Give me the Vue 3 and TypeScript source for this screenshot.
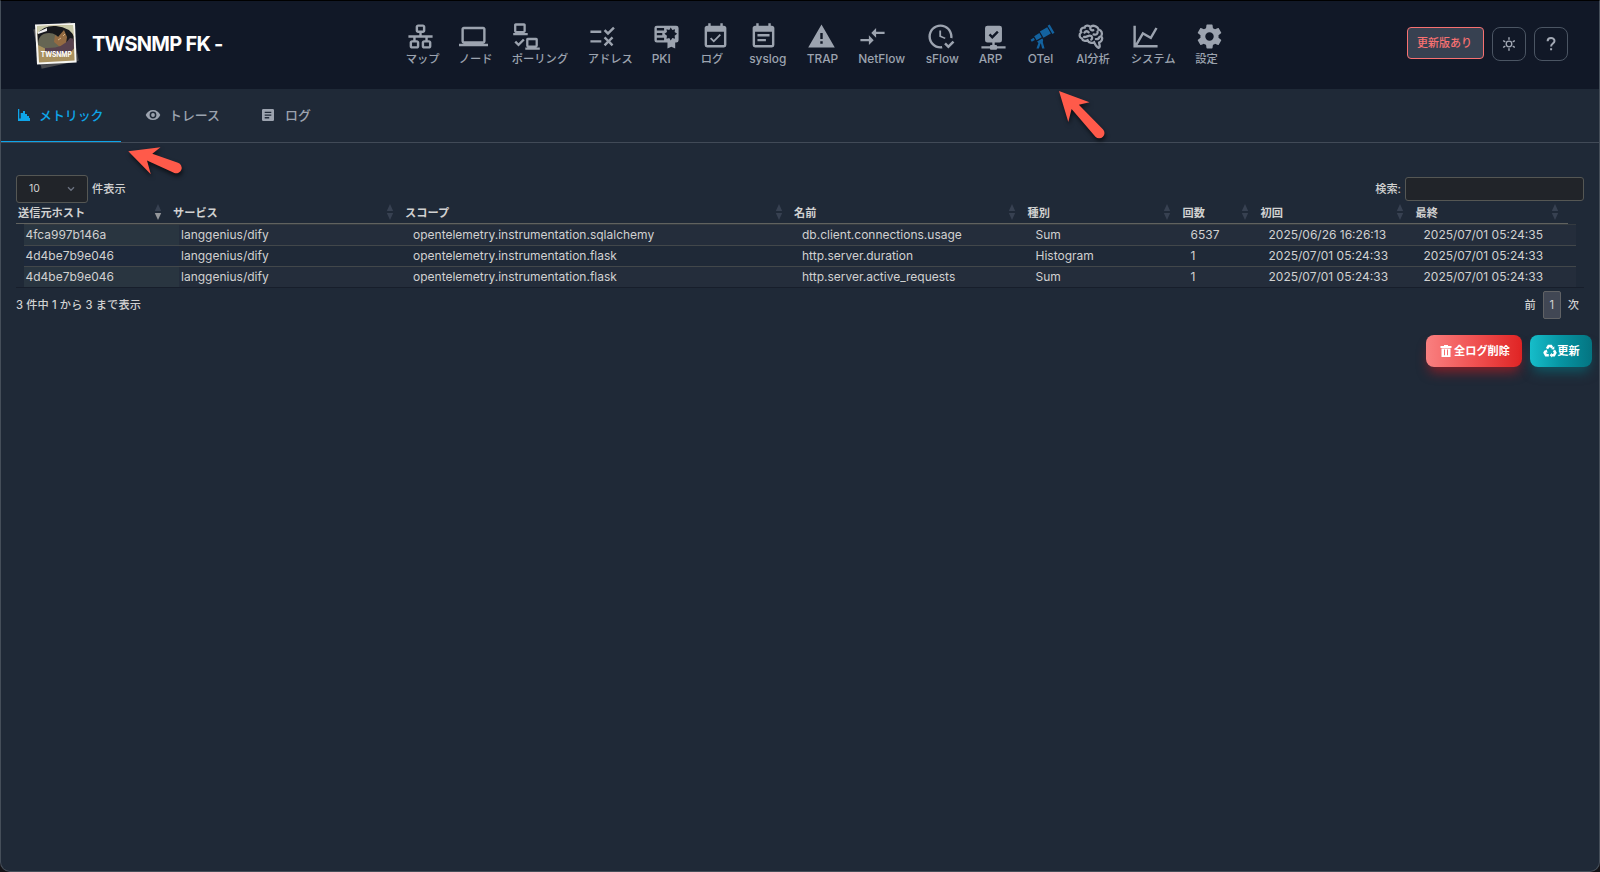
<script setup lang="ts">
interface NavItem {
  label: string
  icon: string
  active?: boolean
  stroke?: string
  even?: boolean
  latin?: boolean
}

const calendar =
  'M19 19H5V8H19ZM16 1V3H8V1H6V3H5C3.89 3 3 3.89 3 5V19A2 2 0 0 0 5 21H19A2 2 0 0 0 21 19V5C21 3.89 20.1 3 19 3H18V1Z'

const nav: NavItem[] = [
  {
    label: 'マップ',
    icon: 'M10 2C8.9 2 8 2.9 8 4V7C8 8.1 8.9 9 10 9H11V11H2V13H6V15H5C3.9 15 3 15.9 3 17V20C3 21.1 3.9 22 5 22H9C10.1 22 11 21.1 11 20V17C11 15.9 10.1 15 9 15H8V13H16V15H15C13.9 15 13 15.9 13 17V20C13 21.1 13.9 22 15 22H19C20.1 22 21 21.1 21 20V17C21 15.9 20.1 15 19 15H18V13H22V11H13V9H14C15.1 9 16 8.1 16 7V4C16 2.9 15.1 2 14 2ZM10 4H14V7H10ZM5 17H9V20H5ZM15 17H19V20H15Z',
    even: true,
  },
  {
    label: 'ノード',
    icon: 'M4 6H20V16H4M20 18A2 2 0 0 0 22 16V6C22 4.89 21.1 4 20 4H4C2.89 4 2 4.89 2 6V16A2 2 0 0 0 4 18H0V20H24V18H20Z',
  },
  {
    label: 'ポーリング',
    icon: 'M3 1H10C10.8 1 11.4 1.6 11.4 2.4V7.5C11.4 8.2 10.9 8.8 10.2 9H13V11H1V9H2.8C2.1 8.8 1.7 8.2 1.7 7.5V2.4C1.7 1.6 2.3 1 3 1ZM3.6 3V7.5H9.5V3ZM13 13H20C20.8 13 21.4 13.6 21.4 14.4V19.5C21.4 20.2 20.9 20.8 20.2 21H23V23H11V21H12.8C12.1 20.8 11.7 20.2 11.7 19.5V14.4C11.7 13.6 12.2 13 13 13ZM13.6 15V19.5H19.5V15ZM3.4 15.5L5.4 17.5L9.1 13.8L10.5 15.2L5.4 20.3L2 16.9Z',
    even: true,
  },
  {
    label: 'アドレス',
    icon: 'M16.54 11L13 7.46l1.41-1.41 2.12 2.12 4.24-4.24 1.41 1.41L16.54 11zM11 7H2v2h9V7zm10 6.41L19.59 12 17 14.59 14.41 12 13 13.41 15.59 16 13 18.59 14.41 20 17 17.41 19.59 20 21 18.59 18.41 16 21 13.41zM11 15H2v2h9v-2z',
  },
  {
    label: 'PKI',
    icon: 'M4 3H20A2 2 0 0 1 22 5V15A2 2 0 0 1 20 17H19.2V22L16 20.4L12.8 22V17H4A2 2 0 0 1 2 15V5A2 2 0 0 1 4 3ZM4 5V7H10V5ZM4 9V11H8.5V9ZM4 13V15H10V13ZM15.5 4.5L14.3 6.6L12 6L12.4 8.3L10.3 9.8L12.4 11.3L12 13.8L14.3 13.2L15.5 15.3L16.8 13.2L19.1 13.8L18.7 11.3L20.8 9.8L18.7 8.3L19.1 6L16.8 6.6Z',
    even: true,
    latin: true,
  },
  {
    label: 'ログ',
    icon: calendar + 'M16.53 11.06L15.47 10L10.59 14.88L8.47 12.76L7.41 13.82L10.59 17Z',
    even: true,
  },
  { label: 'syslog', icon: calendar + 'M14 14H7V16H14ZM17 10H7V12H17Z', even: true, latin: true },
  { label: 'TRAP', icon: 'M13 14H11V9H13M13 18H11V16H13M1 21H23L12 2L1 21Z', latin: true },
  {
    label: 'NetFlow',
    icon: 'M9.01 14H2v2h7.01v3L13 15l-3.99-4v3zm5.98-1v-3H22V8h-7.01V5L11 9l3.99 4z',
    latin: true,
  },
  {
    label: 'sFlow',
    icon: 'M23.5 17L18.5 22L15 18.5L16.5 17L18.5 19L22 15.5L23.5 17M13.1 19.9C12.7 20 12.4 20 12 20C7.6 20 4 16.4 4 12S7.6 4 12 4 20 7.6 20 12C20 12.4 20 12.7 19.9 13.1C20.6 13.2 21.2 13.4 21.8 13.7C21.9 13.1 22 12.6 22 12C22 6.5 17.5 2 12 2S2 6.5 2 12C2 17.5 6.5 22 12 22C12.6 22 13.2 21.9 13.7 21.8C13.4 21.2 13.2 20.6 13.1 19.9M15.6 14.1L11 12.3V7H12.5V11.4L16.2 13Z',
    latin: true,
  },
  {
    label: 'ARP',
    icon: 'M17 3H7A2 2 0 0 0 5 5V15A2 2 0 0 0 7 17H11V19H10A1 1 0 0 0 9 20H2V22H9A1 1 0 0 0 10 23H14A1 1 0 0 0 15 22H22V20H15A1 1 0 0 0 14 19H13V17H17A2 2 0 0 0 19 15V5A2 2 0 0 0 17 3ZM11 14L8 11L9.41 9.6L11 11.2L14.9 7.3L16.3 8.7Z',
    even: true,
    latin: true,
  },
  {
    label: 'OTel',
    icon: 'M21.9 8.9L20.2 9.9L16.2 3L17.9 2ZM9.8 7.9L12.8 13.1L18.9 9.6L15.9 4.4ZM11.4 12.7L9.4 9.2L5.1 11.7L7.1 15.2ZM2.1 14.6L3.1 16.3L5.7 14.8L4.7 13.1ZM12.1 14L11.8 13.6L7.5 16.1L7.8 16.5C8 16.8 8.3 17.1 8.6 17.3L7 22H9L10.4 17.7H10.7L11.7 22H13.7L12.2 16.5C12.7 15.7 12.6 14.8 12.1 14Z',
    active: true,
    latin: true,
  },
  {
    label: 'AI分析',
    icon: '',
    stroke:
      'M11.8 4.2C10.5 2.4 7.6 2.8 7.1 4.7C4.7 4.3 3.2 6.7 4.3 8.6C2.2 10 2.7 13.1 5 13.7C5.6 15.6 8 16.2 9.6 15.1C10.5 17.3 13.2 17.8 15 16.7C15.8 18.6 16.6 20.6 18.6 21.4C20.5 21 19.2 18.7 19.1 17C21.5 16.3 22.4 13.5 20.9 11.7C22.3 9.4 21 6.6 18.7 6.3C18.1 3.3 13.7 2.1 11.8 4.2ZM7 8.7C8 7.2 9.7 7.4 10.5 8.6M12 4.5C11.2 6 12.8 7.3 14.3 6.7M6.7 12.4C8.8 12.7 9.6 11.2 11.6 11.3C13.8 11.5 13.7 13.8 12.6 14.6M14.6 10.2C16.8 11 18.4 9.7 17.8 7.9M16.5 14.1C18.3 14.4 19.2 13.4 19.5 12.3',
  },
  {
    label: 'システム',
    icon: 'M16 11.78L20.24 4.45L21.97 5.45L16.74 14.5L10.23 10.75L5.46 19H22V21H2V3H4V17.54L9.5 8Z',
  },
  {
    label: '設定',
    icon: 'M12 15.5A3.5 3.5 0 0 1 8.5 12A3.5 3.5 0 0 1 12 8.5A3.5 3.5 0 0 1 15.5 12A3.5 3.5 0 0 1 12 15.5M19.43 12.97C19.47 12.65 19.5 12.33 19.5 12C19.5 11.67 19.47 11.34 19.43 11L21.54 9.37C21.73 9.22 21.78 8.95 21.66 8.73L19.66 5.27C19.54 5.05 19.27 4.96 19.05 5.05L16.56 6.05C16.04 5.66 15.5 5.32 14.87 5.07L14.5 2.42C14.46 2.18 14.25 2 14 2H10C9.75 2 9.54 2.18 9.5 2.42L9.13 5.07C8.5 5.32 7.96 5.66 7.44 6.05L4.95 5.05C4.73 4.96 4.46 5.05 4.34 5.27L2.34 8.73C2.21 8.95 2.27 9.22 2.46 9.37L4.57 11C4.53 11.34 4.5 11.67 4.5 12C4.5 12.33 4.53 12.65 4.57 12.97L2.46 14.63C2.27 14.78 2.21 15.05 2.34 15.27L4.34 18.73C4.46 18.95 4.73 19.03 4.95 18.95L7.44 17.94C7.96 18.34 8.5 18.68 9.13 18.93L9.5 21.58C9.54 21.82 9.75 22 10 22H14C14.25 22 14.46 21.82 14.5 21.58L14.87 18.93C15.5 18.67 16.04 18.34 16.56 17.94L19.05 18.95C19.27 19.03 19.54 18.95 19.66 18.73L21.66 15.27C21.78 15.05 21.73 14.78 21.54 14.63Z',
  },
]

const columns = ['送信元ホスト', 'サービス', 'スコープ', '名前', '種別', '回数', '初回', '最終']

const rows: string[][] = [
  ['4fca997b146a', 'langgenius/dify', 'opentelemetry.instrumentation.sqlalchemy', 'db.client.connections.usage', 'Sum', '6537', '2025/06/26 16:26:13', '2025/07/01 05:24:35'],
  ['4d4be7b9e046', 'langgenius/dify', 'opentelemetry.instrumentation.flask', 'http.server.duration', 'Histogram', '1', '2025/07/01 05:24:33', '2025/07/01 05:24:33'],
  ['4d4be7b9e046', 'langgenius/dify', 'opentelemetry.instrumentation.flask', 'http.server.active_requests', 'Sum', '1', '2025/07/01 05:24:33', '2025/07/01 05:24:33'],
]
</script>

<template>
  <div class="window">
    <header class="topbar">
      <svg class="logo" viewBox="-1 -1 50 50">
        <defs>
          <clipPath id="photo"><path d="M5 6L41 5L42.6 40.5L7 42.4Z" /></clipPath>
        </defs>
        <rect x="5" y="5" width="38" height="40" fill="#4a4b4f" transform="rotate(-12 25 25)" />
        <rect x="6" y="5" width="38" height="38" fill="#3a3c43" transform="rotate(-7 25 25)" />
        <path d="M3 4.6L43 3L44.6 42.5L5 44.6Z" fill="#f6f5f2" />
        <g clip-path="url(#photo)">
          <rect width="50" height="50" fill="#a9915f" />
          <path d="M4 4H44V16L32 8L18 7L4 15Z" fill="#c9c9a9" />
          <path d="M5 14Q12 5 24 6Q38 7 43 18L40 26L5 25Z" fill="#17181c" />
          <path d="M6 25Q6 13 17 13Q25 13 29 21L31 28L18 31Z" fill="#656553" />
          <path d="M22 22L23 15L26 17L32 10L35 17L34 24L28 27Z" fill="#946b42" />
          <path d="M26 20L29 18M31 16L33 14" stroke="#d7b184" stroke-width="1" />
          <path d="M13 28Q31 29 38 18Q44 18 44 26L39 32Q26 36 13 31Z" fill="#58424e" />
          <path d="M6 12L15 8V11L6 14Z" fill="#eee" />
        </g>
        <text x="8.8" y="37.2" textLength="31" lengthAdjust="spacingAndGlyphs">TWSNMP</text>
      </svg>
      <h1>TWSNMP FK -</h1>
      <nav class="menu">
        <a v-for="item in nav" :key="item.label" class="menu-item" :class="{ latin: item.latin }">
          <svg class="menu-icon" :class="{ active: item.active }" viewBox="0 0 24 24">
            <path :d="item.icon" :fill-rule="item.even ? 'evenodd' : 'nonzero'" fill="currentColor" />
            <path v-if="item.stroke" :d="item.stroke" fill="none" stroke="currentColor" stroke-width="1.9" stroke-linecap="round" />
          </svg>
          <span>{{ item.label }}</span>
        </a>
      </nav>
      <div class="actions">
        <button class="update">更新版あり</button>
        <button class="square">
          <svg width="14" height="14" viewBox="0 0 14 14" fill="none" stroke="#a3a9b5">
            <circle cx="7" cy="7" r="2.8" stroke-width="1.3" />
            <path d="M7 .8V2.2M7 11.8V13.2M1.6 3.9L2.8 4.6M11.2 9.4L12.4 10.1M1.6 10.1L2.8 9.4M11.2 4.6L12.4 3.9" stroke-width="1.4" stroke-linecap="round" />
          </svg>
        </button>
        <button class="square">
          <svg width="14" height="16" viewBox="0 0 14 16" fill="none" stroke="#a3a9b5" stroke-width="2">
            <path d="M3.6 5.2C3.6 .9 10.5 .9 10.5 5C10.5 7.6 7.1 7.6 7.1 10.5" />
            <path d="M7.1 12.2V14.3" />
          </svg>
        </button>
      </div>
    </header>

    <div class="tabs">
      <div class="tab selected">
        <svg width="14" height="14" viewBox="0 0 14 14"><path d="M1 1H2.3V10.5H3.7V5H6V3H8V6H10V8H12V10H13V13H1Z" fill="currentColor" /></svg>
        <span>メトリック</span>
      </div>
      <div class="tab trace">
        <svg width="16" height="14" viewBox="0 0 16 14"><path fill-rule="evenodd" d="M8 2C4.6 2 2 4 .7 7C2 10 4.6 12 8 12S14 10 15.3 7C14 4 11.4 2 8 2ZM8 3.6A3.4 3.4 0 1 1 8 10.4A3.4 3.4 0 1 1 8 3.6ZM8 5.1A1.9 1.9 0 1 0 8 8.9A1.9 1.9 0 1 0 8 5.1Z" fill="currentColor" /></svg>
        <span>トレース</span>
      </div>
      <div class="tab logs">
        <svg width="14" height="14" viewBox="0 0 14 14"><path fill-rule="evenodd" d="M2.2 1H11.8Q13 1 13 2.2V11.8Q13 13 11.8 13H2.2Q1 13 1 11.8V2.2Q1 1 2.2 1ZM3.7 3.7V5H10.3V3.7ZM3.7 6.4V7.7H10.3V6.4ZM3.7 9.1V10.4H8.2V9.1Z" fill="currentColor" /></svg>
        <span>ログ</span>
      </div>
    </div>

    <main class="content">
      <div class="controls">
        <div class="length">
          <div class="select">
            <span>10</span>
            <svg width="8" height="6" viewBox="0 0 8 6"><path d="M1 1.2L4 4.3L7 1.2" fill="none" stroke="#6b7280" stroke-width="1.3" /></svg>
          </div>
          <span>件表示</span>
        </div>
        <label class="search"><span>検索:</span><input type="text" /></label>
      </div>

      <div class="table">
        <div class="grid head">
          <div v-for="(name, i) in columns" :key="name" class="th">
            <span>{{ name }}</span>
            <svg width="8" height="18" viewBox="0 0 8 18">
              <path d="M4 1L7.2 8H.8Z" fill="#374151" />
              <path d="M4 17L7.2 10H.8Z" :fill="i === 0 ? '#94979b' : '#374151'" />
            </svg>
          </div>
        </div>
        <div v-for="(row, r) in rows" :key="r" class="grid row">
          <div v-for="(cell, c) in row" :key="c" class="td">{{ cell }}</div>
        </div>
      </div>

      <div class="footer">
        <span class="info">3 件中 1 から 3 まで表示</span>
        <div class="pager"><span>前</span><span class="page">1</span><span>次</span></div>
      </div>
    </main>

    <div class="buttons">
      <button class="btn delete">
        <svg width="12" height="14" viewBox="0 0 12 14"><path fill-rule="evenodd" d="M4 1H8V2H11.5V4H.5V2H4ZM1.5 4.5H10.5V13H1.5ZM4 5.5V11.3H5V5.5ZM7 5.5V11.3H8V5.5Z" fill="#fff" /></svg>
        <span>全ログ削除</span>
      </button>
      <button class="btn refresh">
        <svg width="14" height="14" viewBox="0 0 14 14" fill="none" stroke="#fff" stroke-width="2.6">
          <path d="M4 4.6L5.6 2H8L9.2 3.9M11 6.4L12.3 8.8L11 11.2H8.6M5.8 11.2H3L1.7 8.8L2.6 7.1" />
          <path d="M8.2 5.3L11.3 5.4L11.3 2.2ZM8.9 8.7V13.4L6.6 11.2ZM.6 7.5L3.6 5.6L4.7 8.7Z" fill="#fff" stroke="none" />
        </svg>
        <span>更新</span>
      </button>
    </div>

    <svg class="pointers" width="1600" height="200" viewBox="0 0 1600 200">
      <g fill="#ff5a4a">
        <path d="M1059 91L1089.5 102.3L1078.8 104.8L1102.9 129.2A5.3 5.3 0 0 1 1095.4 136.8L1071.6 109L1068.3 122Z" />
        <path d="M128.3 151.2L160.5 147.3L152.3 153.8L178 162.7A5.4 5.4 0 0 1 174.4 173L147 160.5L150.8 174.2Z" />
      </g>
    </svg>
  </div>
</template>

<style>
body {
  background: #141317;
}
</style>

<style scoped>
.window {
  position: relative;
  box-sizing: border-box;
  width: 1600px;
  height: 872px;
  overflow: hidden;
  border: 1px solid #454e59;
  border-top-color: #000;
  border-radius: 0 0 10px 10px;
  background: #1f2937;
  color: #d1d1d1;
  font-family: Inter, 'Noto Sans CJK JP', sans-serif;
  font-size: 12px;
}
.topbar {
  display: flex;
  height: 88px;
  background: #111827;
}
.logo {
  flex: none;
  width: 50px;
  height: 50px;
  margin: 18px 0 0 30px;
}
.logo text {
  font: bold 7px Inter, sans-serif;
  fill: #fff;
}
h1 {
  flex: none;
  width: 313px;
  margin: 29px 0 0 11px;
  color: #fff;
  font-size: 20px;
  line-height: 28px;
  font-weight: 650;
  letter-spacing: -0.75px;
  white-space: nowrap;
}
.menu {
  display: grid;
  grid-template-columns: 53px 53px 76px 64px 49px 48.5px 57.5px 51.5px 67.5px 53px 49px 48.5px 54.5px 64.5px 40px;
  flex: none;
  width: 830px;
  margin-top: 21px;
}
.menu-item {
  display: flex;
  flex-direction: column;
  color: #9ca3af;
  font-size: 11.3px;
  line-height: 16px;
  font-weight: 500;
  white-space: nowrap;
}
.menu-item.latin {
  font-size: 11.9px;
}
.menu-item span {
  padding-left: 0.7px;
}
.menu-icon {
  display: block;
  width: 29px;
  height: 29px;
  margin-left: 0.7px;
}
.menu-icon.active {
  color: #13629f;
}
.actions {
  display: flex;
  gap: 8px;
  margin: 26px 0 0 172px;
}
button {
  display: flex;
  box-sizing: border-box;
  align-items: center;
  justify-content: center;
  padding: 0;
  font-family: inherit;
}
.update {
  width: 77px;
  height: 32px;
  padding: 0 2px 2px 0;
  border: 1px solid #f87171;
  border-radius: 4px;
  background: #374151;
  color: #f87171;
  font-size: 11px;
  font-weight: 500;
}
.square {
  width: 34px;
  height: 34px;
  border: 1px solid #4b5563;
  border-radius: 8px;
  background: none;
}
.tabs {
  display: flex;
  box-sizing: border-box;
  height: 54px;
  border-bottom: 1px solid #414a57;
  color: #9ca3af;
  font-size: 12.9px;
  font-weight: 500;
}
.tab {
  display: flex;
  box-sizing: border-box;
  align-items: center;
  gap: 8px;
  height: 53px;
  padding: 0 16px 1px;
}
.tab span {
  margin-top: -2px;
}
.tab.selected {
  width: 120px;
  padding-bottom: 0;
  border-bottom: 1px solid #0ea5e9;
  color: #0ea5e9;
}
.tab.trace {
  width: 122px;
  padding-left: 24px;
  gap: 8px;
}
.tab.logs {
  padding-left: 18px;
  gap: 10px;
}
.tab svg {
  flex: none;
}
.content {
  padding: 31px 15px 0;
}
.controls {
  display: flex;
  justify-content: space-between;
  height: 29px;
}
.length {
  display: flex;
  gap: 4px;
  font-size: 11.2px;
  line-height: 30px;
  font-weight: 500;
}
.select {
  display: flex;
  box-sizing: border-box;
  align-items: center;
  justify-content: space-between;
  width: 72px;
  height: 28px;
  margin-top: 1px;
  padding: 0 12px;
  border: 1px solid #555754;
  border-radius: 3px;
  background: #212429;
  font-size: 10.5px;
  font-weight: 400;
}
.search {
  display: flex;
  align-items: center;
  height: 30px;
  gap: 4px;
  font-size: 11.2px;
  font-weight: 500;
}
.search span {
  margin-top: -2px;
}
input {
  box-sizing: border-box;
  width: 179px;
  height: 24px;
  border: 1px solid #555754;
  border-radius: 3px;
  background: #212429;
}
.table {
  border-bottom: 1px solid #171e2b;
}
.grid {
  display: grid;
  grid-template-columns: 155px 232px 389px 233.5px 155px 78px 155px 154.5px;
  width: 1552px;
}
.head {
  height: 20px;
  border-bottom: 1px solid #60625f;
  font-size: 11.2px;
  line-height: 20px;
  font-weight: 700;
}
.th {
  display: flex;
  justify-content: space-between;
  padding: 0 9.5px 0 2px;
}
.row {
  box-sizing: border-box;
  height: 21px;
  margin-left: 8px;
  border-top: 1px solid #42474a;
  line-height: 20px;
}
.row:nth-child(2) {
  border-top-color: #343a40;
}
.row:nth-child(even) {
  background: #242d3b;
}
.td {
  padding-left: 2px;
  white-space: nowrap;
}
.row .td:first-child {
  padding-left: 1.5px;
  background: #1e293b;
}
.row:nth-child(even) .td:first-child {
  background: #293540;
}
.footer {
  display: flex;
  justify-content: space-between;
  height: 32px;
  padding-top: 3px;
  font-size: 11.2px;
  line-height: 28px;
  font-weight: 500;
}
.info {
  letter-spacing: 0.12px;
}
.pager {
  display: flex;
  gap: 7px;
  padding-right: 5px;
}
.page {
  box-sizing: border-box;
  width: 18px;
  height: 28px;
  border: 1px solid #606265;
  border-radius: 2px;
  background: #414754;
  line-height: 26px;
  font-weight: 400;
  text-align: center;
}
.buttons {
  display: flex;
  justify-content: flex-end;
  gap: 8px;
  padding: 12px 7px 0;
}
.btn {
  height: 32px;
  border: 0;
  border-radius: 8px;
  color: #fff;
  font-size: 11.2px;
  font-weight: 700;
}
.btn span {
  margin-top: -2px;
}
.delete {
  gap: 2px;
  width: 96px;
  padding-left: 2px;
  background: linear-gradient(90deg, #f98080, #f05252 50%, #e02424);
  box-shadow: 0 8px 12px -3px rgba(200, 25, 30, 0.6);
}
.refresh {
  gap: 0;
  width: 62px;
  padding-left: 1px;
  background: linear-gradient(90deg, #16bdca, #0694a2 50%, #047481);
  box-shadow: 0 8px 12px -3px rgba(4, 116, 129, 0.6);
}
.pointers {
  position: absolute;
  top: -1px;
  left: -1px;
  pointer-events: none;
  filter: drop-shadow(1px 3px 2px rgba(0, 0, 0, 0.6));
}
</style>
